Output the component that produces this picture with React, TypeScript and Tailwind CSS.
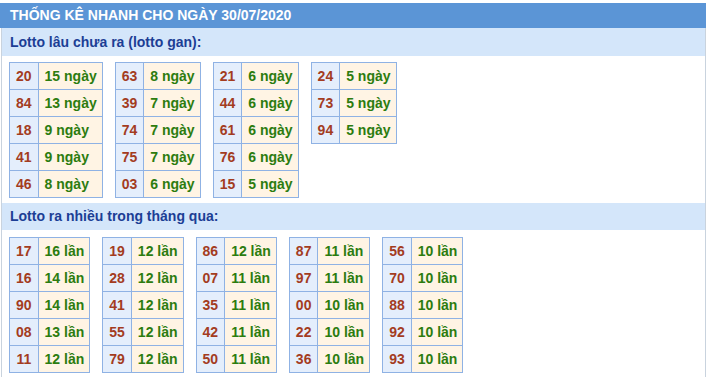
const ganData: [string, string][][] = [
  [["20", "15 ngày"], ["84", "13 ngày"], ["18", "9 ngày"], ["41", "9 ngày"], ["46", "8 ngày"]],
  [["63", "8 ngày"], ["39", "7 ngày"], ["74", "7 ngày"], ["75", "7 ngày"], ["03", "6 ngày"]],
  [["21", "6 ngày"], ["44", "6 ngày"], ["61", "6 ngày"], ["76", "6 ngày"], ["15", "5 ngày"]],
  [["24", "5 ngày"], ["73", "5 ngày"], ["94", "5 ngày"]],
];

const hotData: [string, string][][] = [
  [["17", "16 lần"], ["16", "14 lần"], ["90", "14 lần"], ["08", "13 lần"], ["11", "12 lần"]],
  [["19", "12 lần"], ["28", "12 lần"], ["41", "12 lần"], ["55", "12 lần"], ["79", "12 lần"]],
  [["86", "12 lần"], ["07", "11 lần"], ["35", "11 lần"], ["42", "11 lần"], ["50", "11 lần"]],
  [["87", "11 lần"], ["97", "11 lần"], ["00", "10 lần"], ["22", "10 lần"], ["36", "10 lần"]],
  [["56", "10 lần"], ["70", "10 lần"], ["88", "10 lần"], ["92", "10 lần"], ["93", "10 lần"]],
];

function StatTable({ rows }: { rows: [string, string][] }) {
  return (
    <div className="inline-grid grid-cols-[auto_auto] border-t border-l border-[#8fb2e4]">
      {rows.map(([num, val]) => (
        <div key={num} className="contents">
          <div className="h-[27px] flex items-center justify-center px-[6px] bg-[#e4eefc] border-r border-b border-[#8fb2e4] text-[#a33c1f]">
            {num}
          </div>
          <div className="h-[27px] flex items-center pl-[6px] pr-[5px] bg-[#fff4e4] border-r border-b border-[#8fb2e4] text-[#2c7c0f]">
            {val}
          </div>
        </div>
      ))}
    </div>
  );
}

function SectionTitle({ text, height }: { text: string; height: string }) {
  return (
    <div className={`${height} flex items-center px-[8px] bg-[#d4e6fa] text-[#1c3e95]`}>{text}</div>
  );
}

export default function App() {
  return (
    <div className="w-[706px] h-[377px] bg-white pt-[3px] overflow-hidden font-['Liberation_Sans',Arial,sans-serif] font-bold text-[14px]">
      <div className="h-[374px] border-l border-r border-[#c9d3de] ml-[1px] w-[705px]">
        {/* Header */}
        <div className="h-[25px] -ml-[2px] w-[707px] flex items-center px-[10px] bg-[#5b95d6] text-white">
          THỐNG KÊ NHANH CHO NGÀY 30/07/2020
        </div>

        <SectionTitle text="Lotto lâu chưa ra (lotto gan):" height="h-[28px]" />
        <div className="flex items-start gap-[12px] px-[7px] pt-[6px]">
          {ganData.map((rows, i) => (
            <StatTable key={i} rows={rows} />
          ))}
        </div>

        <div className="mt-[5px]">
          <SectionTitle text="Lotto ra nhiều trong tháng qua:" height="h-[27px]" />
        </div>
        <div className="flex items-start gap-[12px] px-[7px] pt-[7px]">
          {hotData.map((rows, i) => (
            <StatTable key={i} rows={rows} />
          ))}
        </div>
      </div>
    </div>
  );
}
